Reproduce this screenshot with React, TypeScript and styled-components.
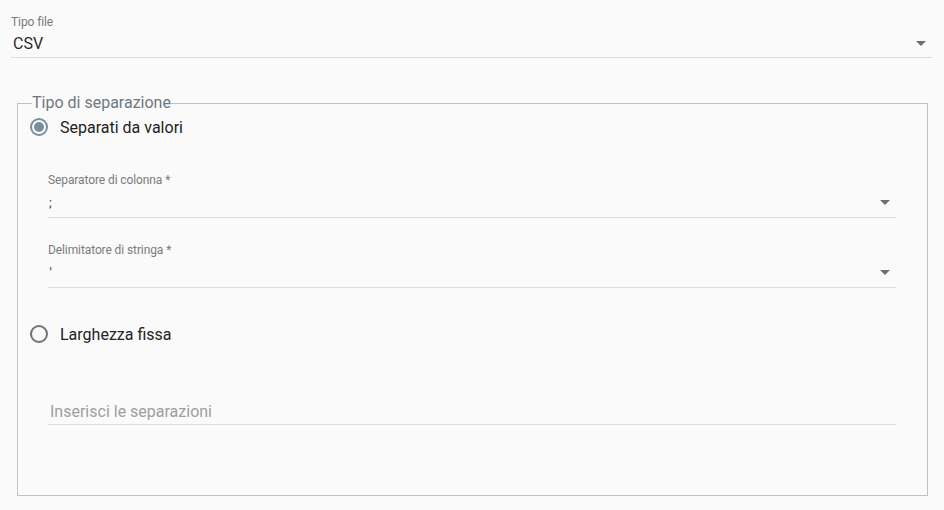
import React from 'react';
import styled, { createGlobalStyle } from 'styled-components';

const GlobalStyle = createGlobalStyle`
  html, body {
    margin: 0;
    padding: 0;
    background: #fafafa;
    font-family: Roboto, "Liberation Sans", Arial, sans-serif;
  }
`;

const Page = styled.div`
  width: 944px;
  height: 510px;
  box-sizing: border-box;
  padding: 15px 12px 0 11px;
  background: #fafafa;
`;

const Field = styled.label<{ $gap?: number }>`
  display: block;
  margin-top: ${(p) => p.$gap ?? 0}px;
`;

const Label = styled.div`
  font-size: 12px;
  line-height: 14px;
  color: #7a7a7a;
  letter-spacing: -0.1px;
`;

const Value = styled.div<{ $height?: number; $placeholder?: boolean }>`
  display: flex;
  align-items: center;
  justify-content: space-between;
  box-sizing: border-box;
  height: ${(p) => p.$height ?? 29}px;
  padding: ${(p) => (p.$placeholder ? '2px' : '0')} 6px 0 2px;
  font-size: 16px;
  color: ${(p) => (p.$placeholder ? '#9e9e9e' : '#2a2a2a')};
  border-bottom: 1px solid #dcdcdc;
`;

const SmallValue = styled(Value)`
  font-size: 13px;
  padding-left: 1px;
  color: #333;
`;

const Tick = styled.span`
  font-family: "DejaVu Sans", sans-serif;
  font-size: 12px;
  color: #444;
`;

const Arrow = styled.span`
  width: 0;
  height: 0;
  border-left: 5px solid transparent;
  border-right: 5px solid transparent;
  border-top: 5px solid #6e6e6e;
`;

const Fieldset = styled.fieldset`
  margin: 36px 4px 0 6px;
  padding: 2px 31px 0 12px;
  height: 402px;
  box-sizing: border-box;
  border: 1px solid #c2c2c2;
  min-width: 0;
`;

const Legend = styled.legend`
  padding: 0;
  margin-left: 2px;
  font-size: 16px;
  line-height: 18px;
  color: #6f7880;
`;

const RadioRow = styled.div<{ $gap?: number }>`
  display: flex;
  align-items: center;
  gap: 12px;
  margin-top: ${(p) => p.$gap ?? 0}px;
  font-size: 16px;
  color: #222;
  height: 24px;
`;

const RadioCircle = styled.span<{ $checked?: boolean }>`
  width: 18px;
  height: 18px;
  box-sizing: border-box;
  border-radius: 50%;
  border: 2px solid ${(p) => (p.$checked ? '#78909c' : '#737373')};
  display: flex;
  align-items: center;
  justify-content: center;
  &::after {
    content: '';
    width: 10px;
    height: 10px;
    border-radius: 50%;
    background: ${(p) => (p.$checked ? '#78909c' : 'transparent')};
  }
`;

const Indented = styled.div<{ $gap?: number }>`
  padding-left: 18px;
  margin-top: ${(p) => p.$gap ?? 0}px;
`;

const App = () => {
  return (
    <>
      <GlobalStyle />
      <Page>
        <Field>
          <Label>Tipo file</Label>
          <Value $height={29}>
            <span>CSV</span>
            <Arrow />
          </Value>
        </Field>

        <Fieldset>
          <Legend>Tipo di separazione</Legend>
          <RadioRow $gap={1}>
            <RadioCircle $checked />
            <span>Separati da valori</span>
          </RadioRow>

          <Indented $gap={34}>
            <Field>
              <Label>Separatore di colonna *</Label>
              <SmallValue $height={31}>
                <span>;</span>
                <Arrow />
              </SmallValue>
            </Field>
            <Field $gap={25}>
              <Label>Delimitatore di stringa *</Label>
              <SmallValue $height={31}>
                <Tick>'</Tick>
                <Arrow />
              </SmallValue>
            </Field>
          </Indented>

          <RadioRow $gap={34}>
            <RadioCircle />
            <span>Larghezza fissa</span>
          </RadioRow>

          <Indented $gap={50}>
            <Value $placeholder>
              <span>Inserisci le separazioni</span>
            </Value>
          </Indented>
        </Fieldset>
      </Page>
    </>
  );
};

export default App;
